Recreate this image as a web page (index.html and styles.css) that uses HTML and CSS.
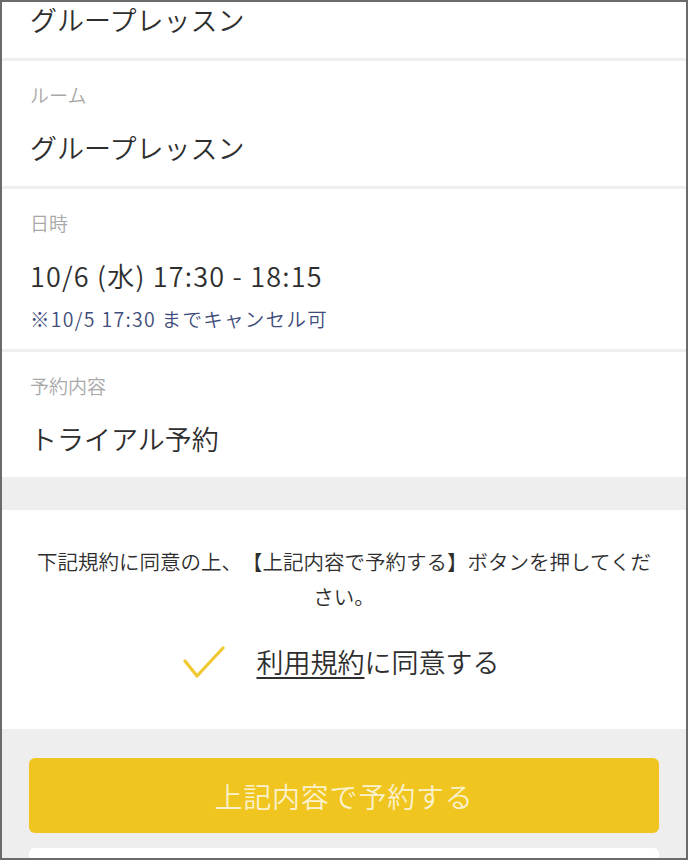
FILE: index.html
```html
<!DOCTYPE html>
<html lang="ja">
<head>
<meta charset="utf-8">
<title>予約確認</title>
<link rel="stylesheet" href="styles.css">
</head>
<body>
<div class="frame">
  <div class="scroll">
    <section class="field field-first">
      <div class="value">グループレッスン</div>
    </section>
    <section class="field">
      <div class="label">ルーム</div>
      <div class="value">グループレッスン</div>
    </section>
    <section class="field field-date">
      <div class="label">日時</div>
      <div class="value value-date">10/6 (水) 17:30 - 18:15</div>
      <div class="note">※10/5 17:30 までキャンセル可</div>
    </section>
    <section class="field">
      <div class="label">予約内容</div>
      <div class="value">トライアル予約</div>
    </section>

    <section class="agree">
      <p class="agree-text">下記規約に同意の上、【上記内容で予約する】ボタンを押してください。</p>
      <div class="agree-row">
        <svg class="check" width="42" height="34" viewBox="0 0 42 34" aria-hidden="true">
          <polyline points="2,15 14,30 40,2" fill="none" stroke="#f0c832" stroke-width="3.2" stroke-linecap="round" stroke-linejoin="round"/>
        </svg>
        <span class="agree-label"><span class="terms">利用規約</span>に同意する</span>
      </div>
    </section>

    <div class="actions">
      <button class="btn-primary" type="button">上記内容で予約する</button>
      <div class="next-card"></div>
    </div>
  </div>
</div>
</body>
</html>
```

FILE: styles.css
```css
* { box-sizing: border-box; }

html, body {
  margin: 0;
  padding: 0;
  background: #6b6b6b;
}

body {
  font-family: "Noto Sans CJK JP", "Noto Sans", sans-serif;
  font-weight: 350;
  color: #333333;
  text-spacing-trim: space-all;
}

.frame {
  width: 688px;
  height: 860px;
  border: 2px solid #6b6b6b;
  background: #eeeeee;
  overflow: hidden;
}

.field {
  background: #ffffff;
  padding: 22px 28px 20px;
  border-bottom: 3px solid #eeeeee;
}

.field-first {
  padding-top: 0;
}

.field-first .value {
  margin-top: 0;
}

.label {
  font-size: 19px;
  line-height: 24px;
  color: #a8a8a8;
}

.value {
  margin-top: 23px;
  font-size: 27px;
  line-height: 36px;
  color: #2e2e2e;
}

.value-date {
  letter-spacing: 1.2px;
}

.note {
  margin-top: 14px;
  font-size: 19.5px;
  line-height: 22px;
  letter-spacing: 1.3px;
  color: #3f4d7b;
}

.field-date {
  padding-bottom: 19px;
}

.agree {
  margin-top: 30px;
  background: #ffffff;
  padding: 34px 30px 47px;
}

.agree-text {
  margin: 0;
  font-size: 20.5px;
  line-height: 35px;
  text-align: center;
  color: #2e2e2e;
}

.agree-row {
  margin-top: 28px;
  display: flex;
  align-items: center;
  justify-content: center;
  gap: 32px;
  height: 40px;
}

.check {
  display: block;
  margin-top: 2px;
  margin-left: -6px;
}

.agree-label {
  font-size: 27px;
  line-height: 36px;
  color: #2e2e2e;
}

.terms {
  text-decoration: underline;
  text-decoration-thickness: 1.5px;
  text-underline-offset: 4px;
}

.actions {
  padding: 29px 27px 0;
  display: flex;
  flex-direction: column;
  gap: 15px;
}

.btn-primary {
  display: block;
  width: 100%;
  height: 75px;
  border: none;
  border-radius: 6px;
  background: #f0c51f;
  color: #fbf1cc;
  font-family: "Noto Sans CJK JP", "Noto Sans", sans-serif;
  font-weight: 350;
  font-size: 28px;
  letter-spacing: 0.8px;
  padding: 0;
}

.next-card {
  height: 60px;
  background: #ffffff;
  border-radius: 6px;
}
```
